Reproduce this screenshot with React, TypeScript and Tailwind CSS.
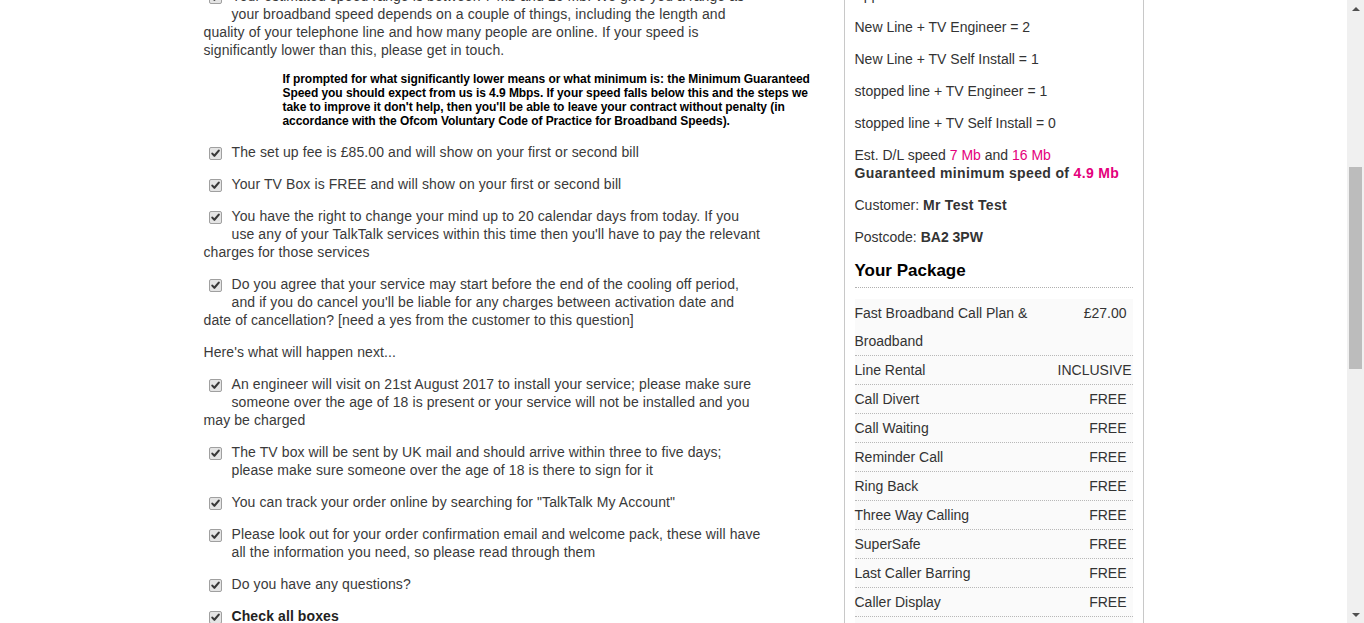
import React from 'react';

const FONT = { fontFamily: '"Liberation Sans", Arial, sans-serif' };

const PACKAGE: [string, string][] = [
  ['Line Rental', 'INCLUSIVE'],
  ['Call Divert', 'FREE'],
  ['Call Waiting', 'FREE'],
  ['Reminder Call', 'FREE'],
  ['Ring Back', 'FREE'],
  ['Three Way Calling', 'FREE'],
  ['SuperSafe', 'FREE'],
  ['Last Caller Barring', 'FREE'],
  ['Caller Display', 'FREE'],
];

function Tick() {
  return (
    <span className="inline-block w-[13px] h-[13px] border border-[#a0a0a0] rounded-[2px] bg-[#e4e4e4]">
      <svg viewBox="0 0 11 11" className="w-[11px] h-[11px] block">
        <path d="M2.3 5.6 L4.4 7.8 L8.8 2.6" fill="none" stroke="#383838" strokeWidth="2.1" strokeLinecap="round" strokeLinejoin="round" />
      </svg>
    </span>
  );
}

function Item({ children, bold = false }: { children: React.ReactNode; bold?: boolean }) {
  return (
    <div className={`mb-[14px] leading-[18px] ${bold ? 'font-bold text-[#222]' : ''}`}>
      <span className="float-left w-[28px] h-[20px] pl-[5px] pt-[3px]">
        <Tick />
      </span>
      {children}
    </div>
  );
}

function Pink({ children }: { children: React.ReactNode }) {
  return <span className="text-[#e4007c]">{children}</span>;
}

function Scrollbar() {
  return (
    <div className="w-[17px] h-full bg-[#f0f0f0] flex flex-col shrink-0">
      <div className="h-[17px] flex items-center justify-center">
        <div className="w-0 h-0 border-l-[4px] border-r-[4px] border-b-[4px] border-l-transparent border-r-transparent border-b-[#505050]" />
      </div>
      <div className="mt-[150px] ml-[2px] w-[13px] h-[202px] bg-[#bcbcbc]" />
      <div className="flex-1" />
      <div className="h-[17px] flex items-center justify-center">
        <div className="w-0 h-0 border-l-[4px] border-r-[4px] border-t-[4px] border-l-transparent border-r-transparent border-t-[#505050]" />
      </div>
    </div>
  );
}

export default function App() {
  return (
    <div className="w-[1364px] h-[623px] overflow-hidden flex bg-white" style={FONT}>
      <div className="flex-1 overflow-hidden">
        <div className="w-[940px] mx-auto flex items-start gap-[10px]">
          {/* main column */}
          <div className="w-[630px] -mt-[13px] flex flex-col text-[14px] text-[#3a3a3a] tracking-[0.1px]">
            <div className="w-[570px]">
              <Item>
                Your estimated speed range is between 7 Mb and 16 Mb. We give you a range as<br />
                your broadband speed depends on a couple of things, including the length and<br />
                quality of your telephone line and how many people are online. If your speed is<br />
                significantly lower than this, please get in touch.
              </Item>
            </div>
            <div className="-mt-[1px] mb-[15px] ml-[79px] text-[12px] leading-[14px] font-bold text-black tracking-[-0.06px]">
              If prompted for what significantly lower means or what minimum is: the Minimum Guaranteed<br />
              Speed you should expect from us is 4.9 Mbps. If your speed falls below this and the steps we<br />
              take to improve it don't help, then you'll be able to leave your contract without penalty (in<br />
              accordance with the Ofcom Voluntary Code of Practice for Broadband Speeds).
            </div>
            <div className="w-[570px]">
              <Item>The set up fee is £85.00 and will show on your first or second bill</Item>
              <Item>Your TV Box is FREE and will show on your first or second bill</Item>
              <Item>
                You have the right to change your mind up to 20 calendar days from today. If you<br />
                use any of your TalkTalk services within this time then you'll have to pay the relevant<br />
                charges for those services
              </Item>
              <Item>
                Do you agree that your service may start before the end of the cooling off period,<br />
                and if you do cancel you'll be liable for any charges between activation date and<br />
                date of cancellation? [need a yes from the customer to this question]
              </Item>
              <div className="mb-[14px] leading-[18px]">Here's what will happen next...</div>
              <Item>
                An engineer will visit on 21st August 2017 to install your service; please make sure<br />
                someone over the age of 18 is present or your service will not be installed and you<br />
                may be charged
              </Item>
              <Item>
                The TV box will be sent by UK mail and should arrive within three to five days;<br />
                please make sure someone over the age of 18 is there to sign for it
              </Item>
              <Item>You can track your order online by searching for "TalkTalk My Account"</Item>
              <Item>
                Please look out for your order confirmation email and welcome pack, these will have<br />
                all the information you need, so please read through them
              </Item>
              <Item>Do you have any questions?</Item>
              <Item bold>Check all boxes</Item>
            </div>
          </div>

          {/* side panel */}
          <div className="w-[300px] -mt-[30px] border border-[#c8c8c8] px-[10px] pt-[15px] text-[14px] text-[#333] leading-[18px] shrink-0">
            <p className="mb-[14px]">Appointments</p>
            <p className="mb-[14px]">New Line + TV Engineer = 2</p>
            <p className="mb-[14px]">New Line + TV Self Install = 1</p>
            <p className="mb-[14px]">stopped line + TV Engineer = 1</p>
            <p className="mb-[14px]">stopped line + TV Self Install = 0</p>
            <p className="mb-[14px]">
              Est. D/L speed <Pink>7 Mb</Pink> and <Pink>16 Mb</Pink>
              <br />
              <b className="tracking-[0.35px]">
                Guaranteed minimum speed of <Pink>4.9 Mb</Pink>
              </b>
            </p>
            <p className="mb-[14px]">
              Customer: <b className="tracking-[0.3px]">Mr Test Test</b>
            </p>
            <p className="mb-[14px]">
              Postcode: <b>BA2 3PW</b>
            </p>
            <h3 className="text-[17px] leading-[22px] font-bold text-black pb-[5px] border-b border-dotted border-[#b0b0b0]">
              Your Package
            </h3>
            <div className="mt-[11px] bg-[#fafafa]">
              <div className="flex leading-[28px] border-b border-dotted border-[#b8b8b8]">
                <div className="w-[190px]">Fast Broadband Call Plan &amp; Broadband</div>
                <div className="flex-1 text-right pr-[6px]">£27.00</div>
              </div>
              {PACKAGE.map(([label, value]) => (
                <div key={label} className="flex leading-[28px] border-b border-dotted border-[#b8b8b8]">
                  <div className="flex-1">{label}</div>
                  <div className={`text-right ${value === 'INCLUSIVE' ? 'pr-[1px]' : 'pr-[6px]'}`}>{value}</div>
                </div>
              ))}
              <div className="h-[40px]" />
            </div>
          </div>
        </div>
      </div>
      <Scrollbar />
    </div>
  );
}
